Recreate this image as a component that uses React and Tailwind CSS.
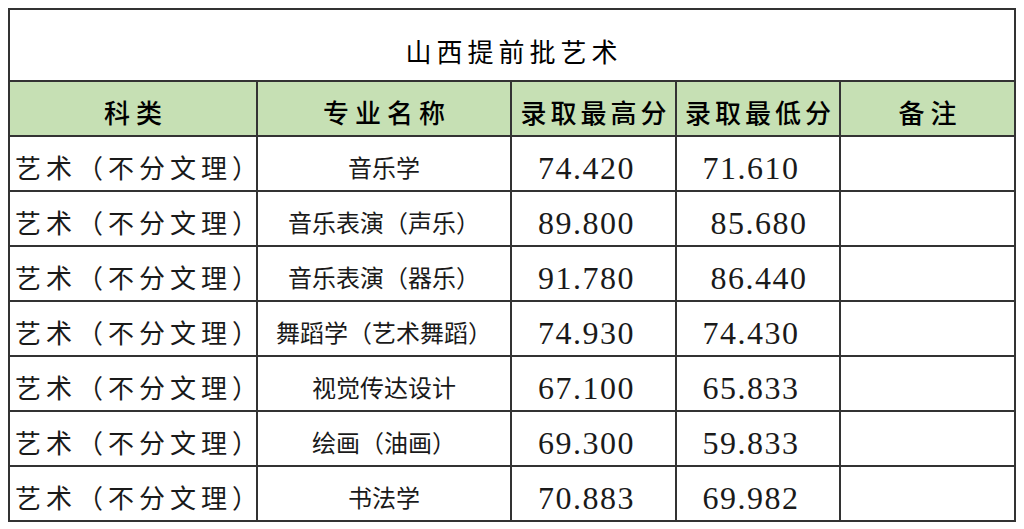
import React from 'react';

const rows = [
  { major: '音乐学', hi: '74.420', lo: '71.610', loShift: true },
  { major: '音乐表演（声乐）', hi: '89.800', lo: '85.680', loShift: false },
  { major: '音乐表演（器乐）', hi: '91.780', lo: '86.440', loShift: false },
  { major: '舞蹈学（艺术舞蹈）', hi: '74.930', lo: '74.430', loShift: true },
  { major: '视觉传达设计', hi: '67.100', lo: '65.833', loShift: true },
  { major: '绘画（油画）', hi: '69.300', lo: '59.833', loShift: true },
  { major: '书法学', hi: '70.883', lo: '69.982', loShift: true },
];

const cjk = "font-['Noto_Sans_CJK_SC','Noto_Sans',sans-serif]";
const num = "font-['Liberation_Serif','DejaVu_Serif',serif]";
const cell = 'border-r-2 border-b-2 border-[#333] flex items-center h-[55px]';

export default function App() {
  return (
    <div className="w-[1024px] h-[529px] bg-white overflow-hidden pt-[8px] pl-[8px]">
      <div className="w-[1008px] border-l-2 border-t-2 border-[#333] grid grid-cols-[248px_254px_165px_164px_175px] text-[#1a1a1a]">
        {/* title */}
        <div
          className={`${cjk} col-span-5 border-r-2 border-b-2 border-[#333] h-[72px] flex items-center justify-center pt-[10px] pl-[4px] text-[26px] tracking-[5px] text-black`}
        >
          山西提前批艺术
        </div>

        {/* header */}
        {['科类', '专业名称', '录取最高分', '录取最低分', '备注'].map((h, i) => (
          <div
            key={h}
            className={`${cell} ${cjk} bg-[#c6e0b4] justify-center pt-[6px] text-[26px] font-medium text-black ${
              i === 2 || i === 3 ? 'tracking-[4px] pl-[4px]' : 'tracking-[6px] pl-[6px]'
            }`}
          >
            {h}
          </div>
        ))}

        {/* data */}
        {rows.map((r) => (
          <React.Fragment key={r.major}>
            <div className={`${cell} ${cjk} pl-[5px] pt-[6px] text-[26px] tracking-[5px]`}>
              艺术（不分文理）
            </div>
            <div className={`${cell} ${cjk} justify-center pt-[6px] text-[24px]`}>
              {r.major}
            </div>
            <div className={`${cell} ${num} justify-center pt-[8px] pr-[14px] text-[32px] tracking-[1.5px]`}>
              {r.hi}
            </div>
            <div
              className={`${cell} ${num} justify-center pt-[8px] text-[32px] tracking-[1.5px] ${
                r.loShift ? 'pr-[14px]' : 'pl-[2px]'
              }`}
            >
              {r.lo}
            </div>
            <div className={cell} />
          </React.Fragment>
        ))}
      </div>
    </div>
  );
}
